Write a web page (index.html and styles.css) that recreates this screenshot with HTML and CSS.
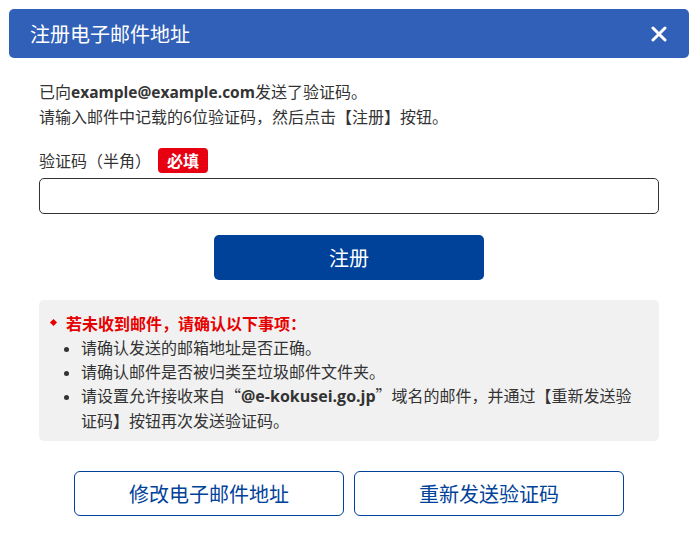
FILE: index.html
```html
<!DOCTYPE html>
<html lang="zh-CN">

<head>
    <meta charset="UTF-8">
    <meta name="viewport" content="width=device-width, initial-scale=1.0">
    <title>注册电子邮件地址</title>

    <link rel="stylesheet" href="styles.css">
</head>

<body>

    <div class="dialog">
        <div class="dialog-header">
            <h1 class="dialog-title">注册电子邮件地址</h1>
            <button class="close" aria-label="关闭">
                <svg width="16" height="16" viewBox="0 0 16 16">
                    <path d="M2 2 L14 14 M14 2 L2 14" stroke="#fff" stroke-width="3" stroke-linecap="round" />
                </svg>
            </button>
        </div>

        <div class="dialog-body">
            <p class="intro">
                已向<b class="latin">example@example.com</b>发送了验证码。<br>
                请输入邮件中记载的6位验证码，然后点击【注册】按钮。
            </p>

            <div class="field-label">
                <span>验证码（半角）</span>
                <span class="required">必填</span>
            </div>
            <input type="text" class="code-input">

            <div class="submit-row">
                <button class="btn-primary">注册</button>
            </div>

            <div class="notice">
                <div class="notice-title">若未收到邮件，请确认以下事项：</div>
                <ul class="notice-list">
                    <li>请确认发送的邮箱地址是否正确。</li>
                    <li>请确认邮件是否被归类至垃圾邮件文件夹。</li>
                    <li>请设置允许接收来自“<b class="latin">@e-kokusei.go.jp</b>”域名的邮件，并通过【重新发送验证码】按钮再次发送验证码。</li>
                </ul>
            </div>

            <div class="actions">
                <button class="btn-outline">修改电子邮件地址</button>
                <button class="btn-outline">重新发送验证码</button>
            </div>
        </div>
    </div>

</body>

</html>
```

FILE: styles.css
```css
body {
    margin: 0;
    background: #fff;
    font-family: "Noto Sans CJK SC", sans-serif;
    color: #333;
}

.dialog {
    width: 680px;
    margin: 9px 0 0 9px;
}

.dialog-header {
    display: flex;
    align-items: center;
    justify-content: space-between;
    height: 49px;
    padding: 0 22px 0 21px;
    background-color: #3060b8;
    border-radius: 5px;
}

.dialog-title {
    margin: 0;
    font-size: 20px;
    font-weight: normal;
    color: #fff;
}

.close {
    display: flex;
    padding: 0;
    border: none;
    background: none;
}

.dialog-body {
    padding: 0 30px;
}

.latin {
    font-family: "Open Sans", "Noto Sans CJK SC", sans-serif;
    font-weight: bold;
}

.intro {
    margin: 21px 0 0;
    font-size: 16px;
    line-height: 24px;
}

.intro .latin {
    font-size: 15.5px;
}

.field-label {
    display: flex;
    align-items: center;
    gap: 7px;
    margin-top: 19px;
    height: 26px;
    font-size: 16px;
}

.required {
    display: inline-block;
    padding: 0 9px;
    line-height: 25px;
    border-radius: 4px;
    background-color: #e60012;
    color: #fff;
    font-weight: bold;
}

.code-input {
    display: block;
    box-sizing: border-box;
    width: 100%;
    height: 36px;
    margin-top: 5px;
    border: 1px solid #333;
    border-radius: 5px;
    font-size: 16px;
}

.submit-row {
    display: flex;
    justify-content: center;
    margin-top: 21px;
}

.btn-primary {
    width: 270px;
    height: 45px;
    border: none;
    border-radius: 5px;
    background-color: #00419a;
    color: #fff;
    font-family: inherit;
    font-size: 20px;
}

.notice {
    margin-top: 20px;
    padding: 11px 14px 9px 12px;
    background-color: #f1f1f1;
    border-radius: 5px;
    font-size: 16px;
    line-height: 24px;
}

.notice-title {
    position: relative;
    padding-left: 15px;
    color: #e60000;
    font-weight: bold;
}

.notice-title::before {
    content: "";
    position: absolute;
    left: 0;
    top: 9px;
    width: 5px;
    height: 5px;
    background-color: #e60000;
    transform: rotate(45deg);
}

.notice-list {
    margin: 0;
    padding-left: 30px;
}

.notice-list li::marker {
    font-size: 14px;
}

.actions {
    display: flex;
    justify-content: center;
    gap: 10px;
    margin-top: 30px;
}

.btn-outline {
    width: 270px;
    height: 45px;
    border: 1px solid #00419a;
    border-radius: 6px;
    background: #fff;
    color: #00419a;
    font-family: inherit;
    font-size: 20px;
}
```
